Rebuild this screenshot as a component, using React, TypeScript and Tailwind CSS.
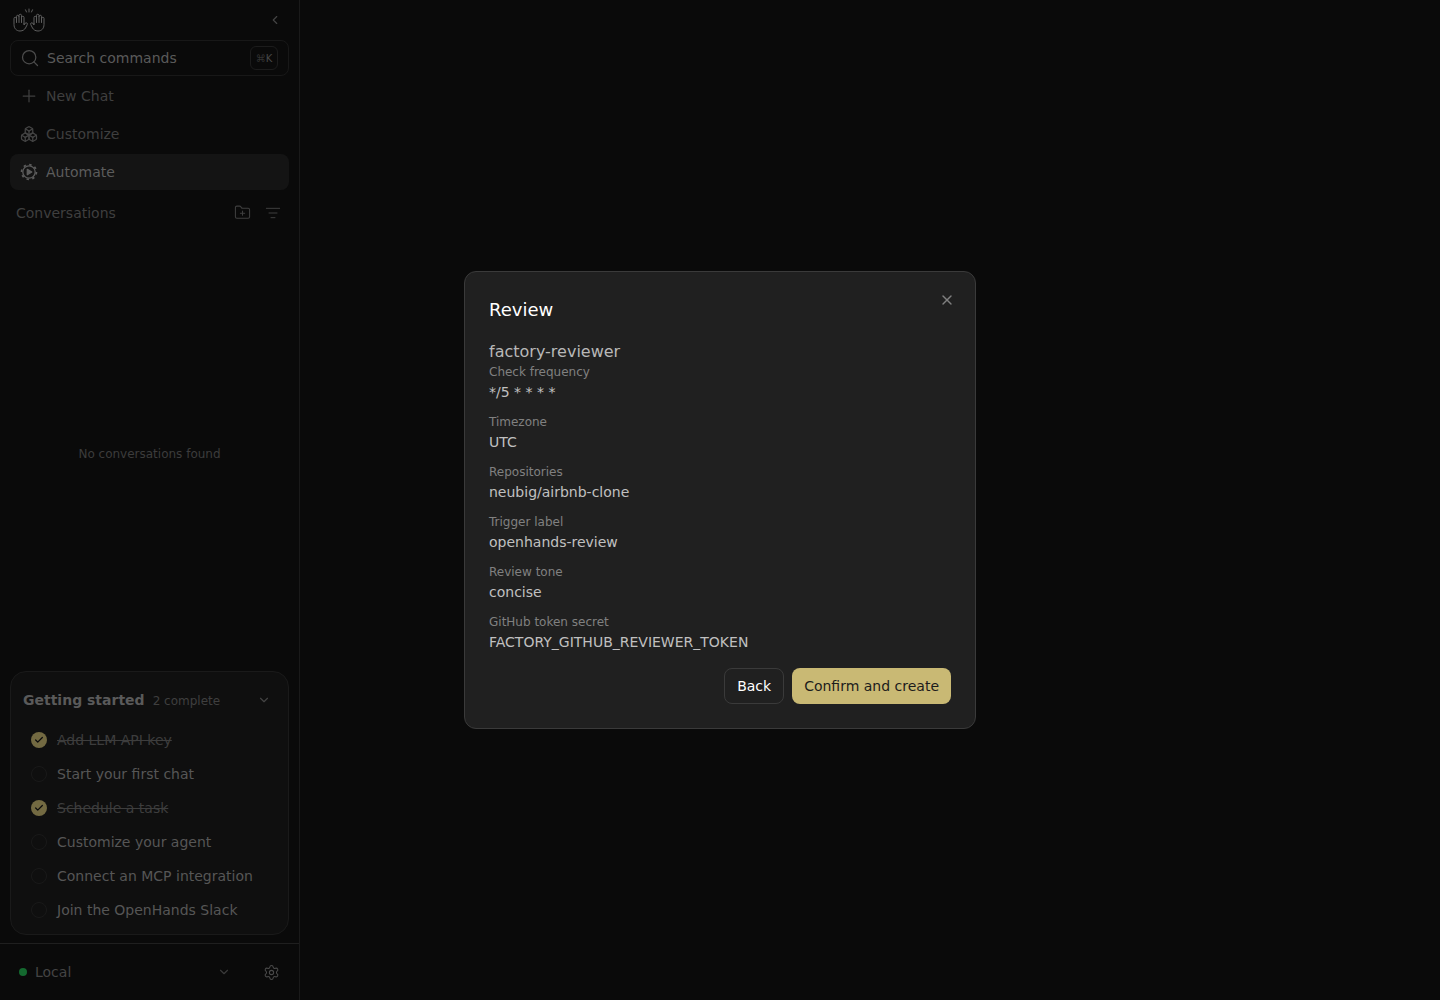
import { Boxes, Check, ChevronDown, ChevronLeft, FolderPlus, ListFilter, Plus, Search, Settings, X } from 'lucide-react';

const font = { fontFamily: '"DejaVu Sans", sans-serif' };

const handPath =
  'M4 10V4a1.25 1.25 0 0 1 2.5 0V9M6.5 4V2a1.25 1.25 0 0 1 2.5 0V9M9 3a1.25 1.25 0 0 1 2.5 0V9M11.5 5a1.25 1.25 0 0 1 2.5 0V11c0 4-2.5 6.5-6 6.5c-3 0-4.5-1.5-5.5-3L0.8 11.2a1.2 1.2 0 0 1 2-1.4L4 11.5V10';

function Logo() {
  return (
    <svg width="34" height="24" viewBox="0 0 34 24" fill="none" stroke="#5e5e5e" strokeWidth="1" strokeLinecap="round" strokeLinejoin="round">
      <path d={handPath} transform="translate(16 5.5) scale(-1 1)" />
      <path d={handPath} transform="translate(18 5.5)" />
      <path d="M17 1v3M13.5 1.8l1 2.2M20.5 1.8l-1 2.2" />
    </svg>
  );
}

function AutomateIcon() {
  return (
    <svg width="18" height="18" viewBox="0 0 18 18" fill="none" stroke="#5c5c5c" strokeWidth="1.3">
      <circle cx="9" cy="9" r="6.2" />
      <circle cx="9" cy="9" r="7.4" strokeWidth="1.8" strokeDasharray="2.4 3.4" />
      <path d="M7.3 6.3 L11.8 9 L7.3 11.7 Z" strokeLinejoin="round" fill="#5c5c5c" />
    </svg>
  );
}

const tasks = [
  { label: 'Add LLM API key', done: true },
  { label: 'Start your first chat', done: false },
  { label: 'Schedule a task', done: true },
  { label: 'Customize your agent', done: false },
  { label: 'Connect an MCP integration', done: false },
  { label: 'Join the OpenHands Slack', done: false },
];

const fields = [
  { label: 'Check frequency', value: '*/5 * * * *' },
  { label: 'Timezone', value: 'UTC' },
  { label: 'Repositories', value: 'neubig/airbnb-clone' },
  { label: 'Trigger label', value: 'openhands-review' },
  { label: 'Review tone', value: 'concise' },
  { label: 'GitHub token secret', value: 'FACTORY_GITHUB_REVIEWER_TOKEN' },
];

function Sidebar() {
  return (
    <aside className="flex h-[1000px] w-[300px] shrink-0 flex-col border-r border-[#1a1a1a] bg-[#0a0a0a]">
      <div className="flex h-10 items-center justify-between pl-[12px] pr-[17px]">
        <Logo />
        <ChevronLeft size={14} color="#444444" />
      </div>

      <div className="flex flex-col gap-0.5 px-2.5">
        <div className="flex h-9 items-center rounded-lg border border-[#181818] pl-[9px] pr-[10px]">
          <Search size={20} strokeWidth={1.5} color="#4c4c4c" />
          <span className="ml-[7px] flex-1 text-sm text-[#5a5a5a]">Search commands</span>
          <span className="flex h-6 w-7 items-center justify-center rounded-md border border-[#1c1c1c] text-[10px] text-[#484848]">
            <span className="text-[#333333]">⌘</span>K
          </span>
        </div>
        <div className="flex h-9 items-center gap-[7px] rounded-lg pl-[9px] text-sm text-[#3f3f3f]">
          <Plus size={20} strokeWidth={1.5} color="#3f3f3f" />
          New Chat
        </div>
        <div className="flex h-9 items-center gap-2 rounded-lg pl-[10px] text-sm text-[#3f3f3f]">
          <Boxes size={18} strokeWidth={1.7} color="#444444" />
          Customize
        </div>
        <div className="flex h-9 items-center gap-2 rounded-lg bg-[#141414] pl-[10px] text-sm text-[#5c5c5c]">
          <AutomateIcon />
          Automate
        </div>
      </div>

      <div className="mt-[14px] flex h-[18px] items-center justify-between pl-4 pr-[18px] text-sm text-[#3f3f3f]">
        <span>Conversations</span>
        <div className="flex items-center gap-[14px]">
          <FolderPlus size={17} strokeWidth={1.5} color="#3f3f3f" className="-translate-y-px" />
          <ListFilter size={16} strokeWidth={1.5} color="#3f3f3f" />
        </div>
      </div>

      <div className="flex flex-1 items-center justify-center pt-[14px] text-xs text-[#3c3c3c]">No conversations found</div>

      <div className="mx-2.5 mb-2 h-[264px] rounded-2xl border border-[#1a1a1a] bg-[#0f0f0f] px-3 pt-[18px]">
        <div className="flex h-5 items-center justify-between pr-[5px]">
          <div className="flex items-baseline gap-2">
            <span className="text-sm font-bold text-[#5a5a5a]">Getting started</span>
            <span className="text-xs text-[#3f3f3f]">2 complete</span>
          </div>
          <ChevronDown size={14} color="#444444" />
        </div>
        <div className="mt-5 flex flex-col gap-3.5 pl-[8px]">
          {tasks.map((task) => (
            <div key={task.label} className="flex h-5 items-center gap-[10px]">
              {task.done ? (
                <span className="flex h-4 w-4 items-center justify-center rounded-full bg-[#736a42]">
                  <Check size={10} strokeWidth={3} color="#0c0c0c" />
                </span>
              ) : (
                <span className="h-4 w-4 rounded-full border border-[#191919]" />
              )}
              <span className={task.done ? 'text-sm text-[#3d3d3d] line-through' : 'text-sm text-[#565656]'}>{task.label}</span>
            </div>
          ))}
        </div>
      </div>

      <div className="flex h-[57px] items-center border-t border-[#1f1f1f] pl-[19px] pr-[19px]">
        <span className="h-2 w-2 rounded-full bg-[#14692f]" />
        <span className="ml-2 flex-1 text-sm text-[#444444]">Local</span>
        <ChevronDown size={14} color="#3a3a3a" />
        <Settings size={17} strokeWidth={1.5} color="#4a4a4a" className="ml-[32px]" />
      </div>
    </aside>
  );
}

function ReviewModal() {
  return (
    <div className="fixed inset-0 flex items-center justify-center">
      <div className="relative flex w-[512px] flex-col gap-4 rounded-xl border border-[#3a3a3a] bg-[#202020] p-6">
        <button className="absolute right-[20px] top-[20px]">
          <X size={16} color="#808080" />
        </button>
        <h2 className="text-lg font-medium text-white">Review</h2>
        <div>
          <div className="text-base text-[#b8b8b8]">factory-reviewer</div>
          <div className="flex flex-col gap-3">
            {fields.map((field) => (
              <div key={field.label} className="flex flex-col gap-0.5">
                <span className="text-xs text-[#808080]">{field.label}</span>
                <span className="text-sm text-[#c0c0c0]">{field.value}</span>
              </div>
            ))}
          </div>
        </div>
        <div className="flex justify-end gap-2">
          <button className="h-9 rounded-lg border border-[#3a3a3a] px-3 text-sm text-white">Back</button>
          <button className="h-9 rounded-lg bg-[#c9b974] px-3 text-sm text-[#1c1c1c]">Confirm and create</button>
        </div>
      </div>
    </div>
  );
}

export default function App() {
  return (
    <div className="flex h-[1000px] bg-[#0a0a0a]" style={font}>
      <Sidebar />
      <main className="flex-1" />
      <ReviewModal />
    </div>
  );
}
